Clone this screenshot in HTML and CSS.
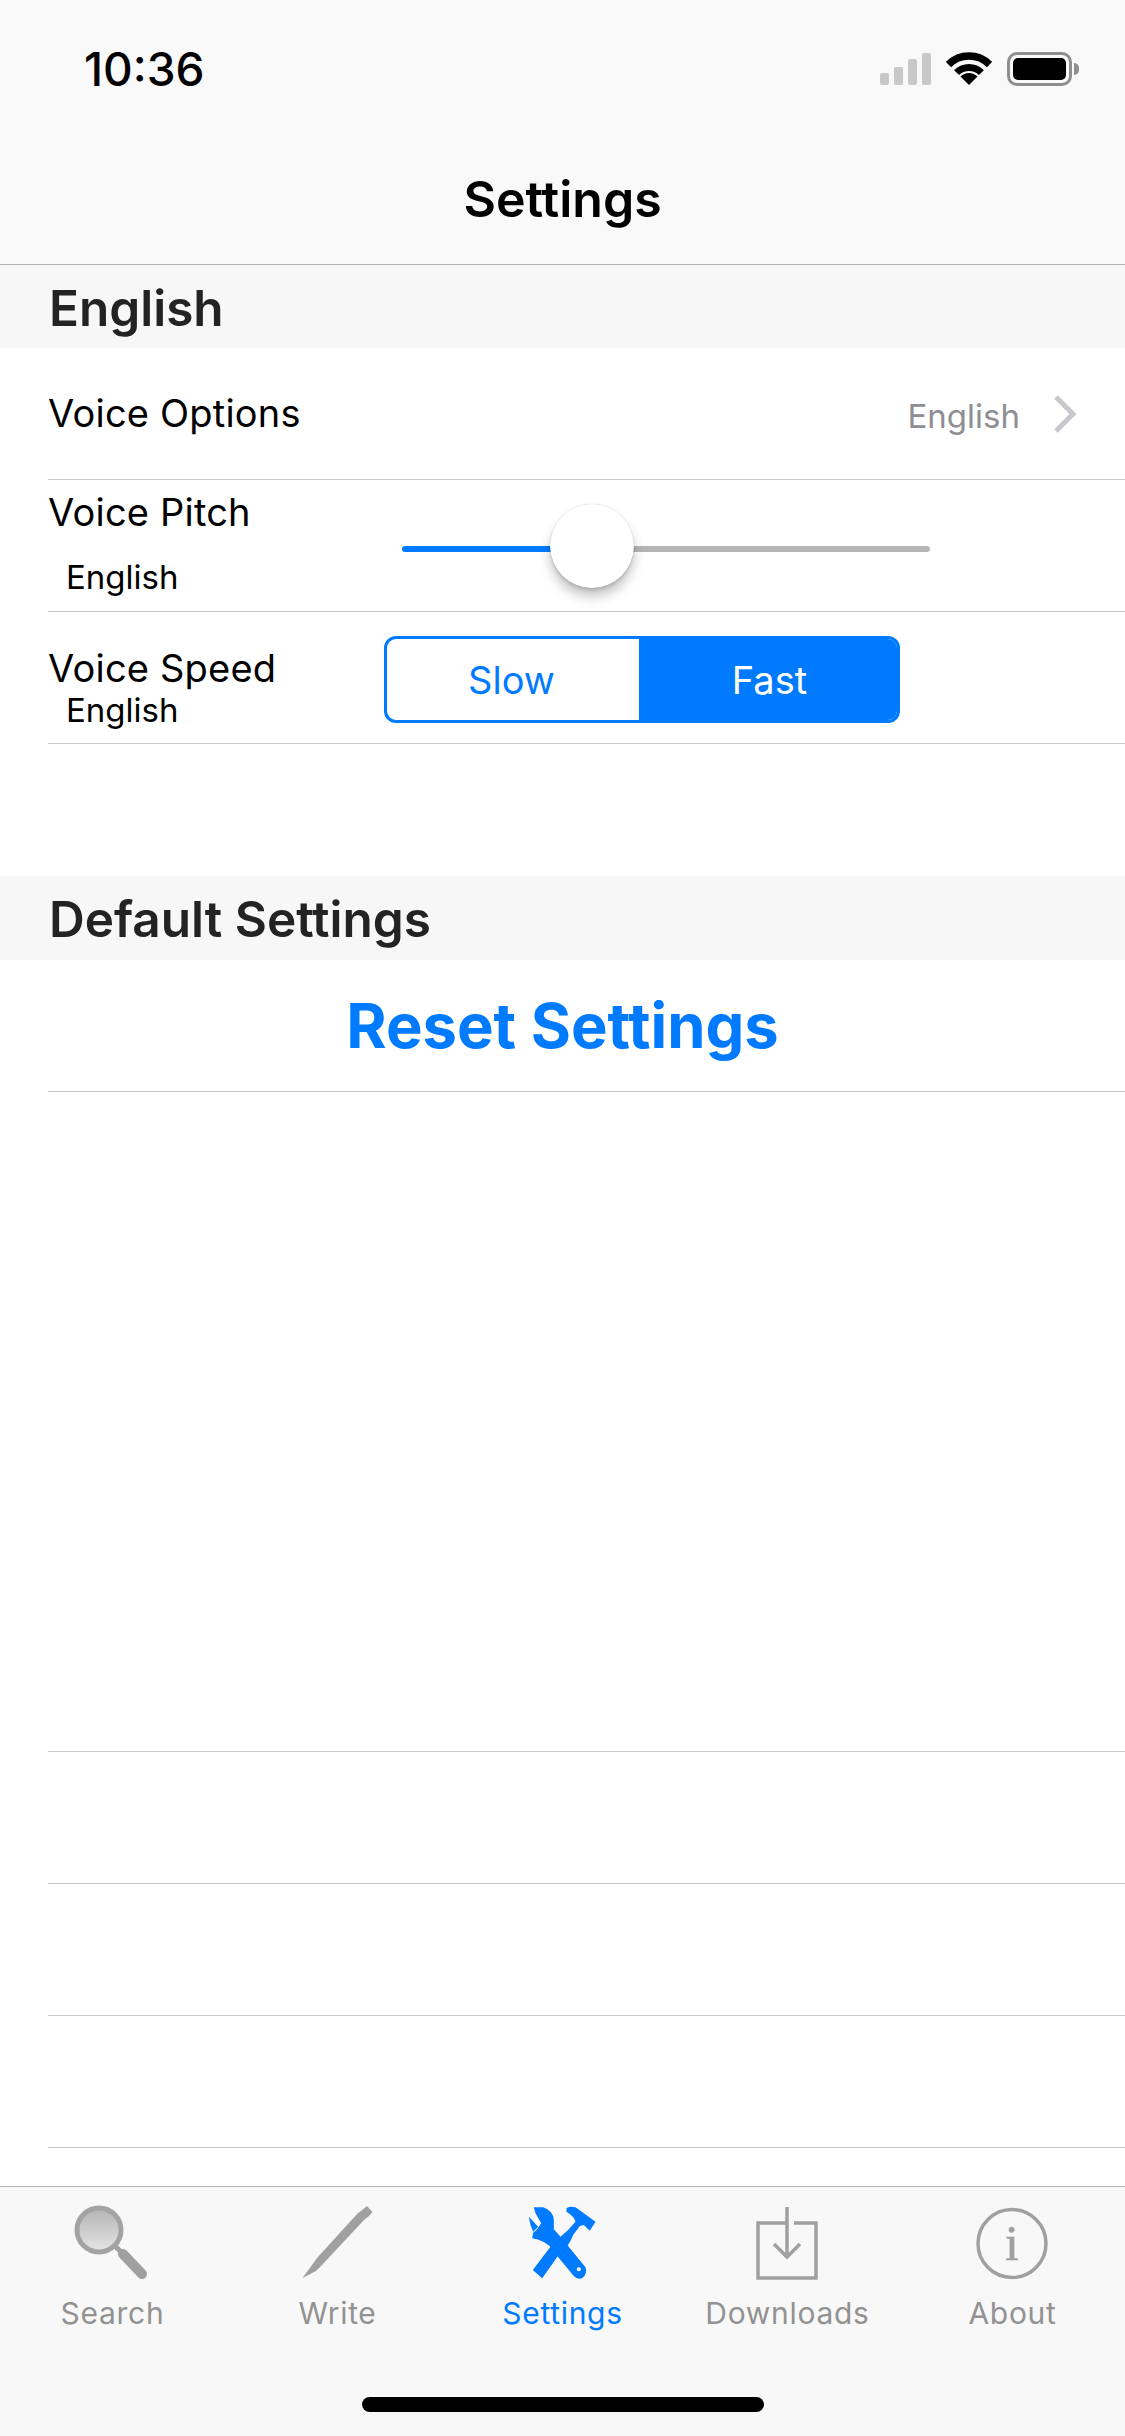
FILE: index.html
```html
<!DOCTYPE html>
<html lang="en">
<head>
<meta charset="utf-8">
<title>Settings</title>
<link rel="stylesheet" href="styles.css">
</head>
<body>
<div class="screen">
  <header class="top">
    <div class="status">
      <span class="time">10:36</span>
      <div class="status-icons">
        <div class="signal"><i class="bar b1"></i><i class="bar b2"></i><i class="bar b3"></i><i class="bar b4"></i></div>
        <svg class="wifi" width="46" height="33" viewBox="0 0 46 33"><path class="wifi-arc" stroke-width="7.5" d="M2.5 12.5A29 29 0 0 1 43.5 12.5"/><path class="wifi-arc" stroke-width="7" d="M10.6 20.6A17.5 17.5 0 0 1 35.4 20.6"/><path d="M23 33L14.5 24.5A12 12 0 0 1 31.5 24.5Z"/></svg>
        <div class="battery"><div class="battery-body"><div class="battery-fill"></div></div><div class="battery-nub"></div></div>
      </div>
    </div>
    <div class="nav"><h1 class="nav-title">Settings</h1></div>
  </header>

  <main class="list">
    <h2 class="section">English</h2>
    <div class="row">
      <span class="label label-solo">Voice Options</span>
      <span class="detail">English</span>
      <svg class="chevron" width="24" height="40" viewBox="0 0 24 40"><path d="M3 3L20 20L3 37"/></svg>
    </div>
    <div class="row">
      <div class="stack pitch-stack"><span class="label">Voice Pitch</span><span class="sub">English</span></div>
      <div class="slider">
        <div class="track-on"></div>
        <div class="track-off"></div>
        <div class="thumb"></div>
      </div>
    </div>
    <div class="row">
      <div class="stack speed-stack"><span class="label">Voice Speed</span><span class="sub">English</span></div>
      <div class="segment">
        <span class="seg seg-off">Slow</span>
        <span class="seg seg-on">Fast</span>
      </div>
    </div>
    <div class="blank"></div>
    <h2 class="section section-second">Default Settings</h2>
    <div class="row reset"><span class="reset-text">Reset Settings</span></div>
    <div class="blank-large"></div>
    <div class="row"></div>
    <div class="row"></div>
    <div class="row"></div>
    <div class="row"></div>
  </main>

  <footer class="tabbar">
    <nav class="tabs">
      <div class="tab">
        <svg class="tab-icon" viewBox="0 0 80 76">
          <defs><linearGradient id="lens" x1="0" y1="0" x2="0" y2="1"><stop offset="0" stop-color="#b4b4b4"/><stop offset="1" stop-color="#e6e6e6"/></linearGradient></defs>
          <path class="ic-line" stroke-width="5" d="M42 41L48 47"/>
          <path class="ic-line" stroke-width="10" stroke-linecap="round" d="M50 49L69 69"/>
          <circle cx="26" cy="25" r="22" fill="url(#lens)" stroke="#a3a3a3" stroke-width="5"/>
        </svg>
        <span class="tab-label">Search</span>
      </div>
      <div class="tab">
        <svg class="tab-icon" viewBox="0 0 80 76">
          <path class="ic-fill" d="M4.500 73L14 60L19 53L60 8L63 6L69 1L74.500 7L71 11L66 15L24 60L18 66Z"/>
        </svg>
        <span class="tab-label">Write</span>
      </div>
      <div class="tab tab-active">
        <svg class="tab-icon" viewBox="0 0 80 76">
          <g transform="translate(-22.5,-15) scale(.3333)">
            <path class="ic-blue" d="M198 55Q205 47 225 52L285 95L268 122L250 105L238 108L218 135Q205 170 185 180L125 265L97 240L150 170L180 140Q205 120 225 95Q222 80 198 65Z"/>
            <path class="ic-blue" d="M100 52L128 52Q158 62 160 90L160 118L180 140L255 232Q262 250 245 265Q230 270 220 258L172 200L158 178Q130 150 95 145L98 128L108 120L122 100L105 70Z"/>
            <path class="ic-blue" d="M85 80L113 110L98 125Q88 105 85 80Z"/>
            <circle class="ic-hole" cx="235" cy="238" r="6"/>
          </g>
        </svg>
        <span class="tab-label">Settings</span>
      </div>
      <div class="tab">
        <svg class="tab-icon" viewBox="0 0 80 76">
          <path class="ic-stroke" d="M39 18H10V73H68V18H46"/>
          <path class="ic-stroke" d="M39 2V52M26 39L39 52L52 39"/>
        </svg>
        <span class="tab-label">Downloads</span>
      </div>
      <div class="tab">
        <svg class="tab-icon" viewBox="0 0 80 76">
          <circle class="ic-stroke" cx="39" cy="38.500" r="34"/>
          <text class="ic-i" x="39" y="55" text-anchor="middle">i</text>
        </svg>
        <span class="tab-label">About</span>
      </div>
    </nav>
    <div class="home"></div>
  </footer>
</div>
</body>
</html>
```
FILE: styles.css
```css
* { box-sizing: border-box; }
html, body { margin: 0; padding: 0; }
body { width: 1125px; height: 2436px; overflow: hidden; background: #fff; font-family: Inter, "Liberation Sans", sans-serif; color: #000; }

.screen { width: 1125px; height: 2436px; display: flex; flex-direction: column; overflow: hidden; }

.top { height: 265px; flex: none; background: #f9f9f9; border-bottom: 1px solid #b2b2b2; }
.status { height: 132px; display: flex; align-items: flex-start; justify-content: space-between; padding: 0 47px 0 84px; }
.time { font-size: 46px; font-weight: 500; line-height: 54px; margin-top: 42px; }
.status-icons { display: flex; align-items: flex-start; gap: 15px; padding-top: 52px; }
.signal { display: flex; align-items: flex-end; gap: 5px; height: 33px; }
.bar { display: block; width: 9px; background: #c8c8c8; border-radius: 2px; }
.b1 { height: 12px; }
.b2 { height: 18px; }
.b3 { height: 26px; }
.b4 { height: 32px; }
.wifi { display: block; fill: #000; }
.wifi-arc { fill: none; stroke: #000; }
.battery { display: flex; align-items: center; gap: 2px; }
.battery-body { width: 65px; height: 34px; border: 3px solid #8e8e8e; border-radius: 10px; padding: 3px; }
.battery-fill { width: 100%; height: 100%; background: #000; border-radius: 5px; }
.battery-nub { width: 5px; height: 12px; background: #8e8e8e; border-radius: 0 6px 6px 0; margin-right: -1px; }

.nav { height: 132px; display: flex; align-items: center; justify-content: center; }
.nav-title { margin: 0; font-size: 50px; font-weight: 600; line-height: 58px; position: relative; top: 1px; }

.list { flex: 1; min-height: 0; overflow: hidden; background: #fff; }
.section { margin: 0; height: 83px; padding-left: 49px; background: #f7f7f7; color: #232323; font-size: 49.500px; font-weight: 600; line-height: 87px; overflow: hidden; }
.section-second { height: 84px; }

.row { height: 132px; margin-left: 48px; border-bottom: 1px solid #c8c8c8; display: flex; align-items: center; }
.label { font-size: 38px; line-height: 46px; letter-spacing: .2px; }
.label-solo { margin-top: -1px; }
.detail { margin-left: auto; color: #8e8e93; font-size: 33px; line-height: 46px; margin-top: 4px; }
.chevron { margin: 0 48px 0 33px; fill: none; stroke: #c7c7cc; stroke-width: 5px; }
.stack { width: 336px; flex: none; display: flex; flex-direction: column; }
.sub { font-size: 33px; line-height: 38px; padding-left: 18px; }
.pitch-stack { gap: 23.500px; margin-top: -6.500px; }
.speed-stack { margin-top: 18px; }
.speed-stack .sub { margin-top: 0; }

.slider { position: relative; margin-left: 18px; width: 528px; height: 6px; margin-top: 6px; display: flex; }
.track-on { width: 190px; background: #007aff; border-radius: 3px 0 0 3px; }
.track-off { flex: 1; background: #b5b5b5; border-radius: 0 3px 3px 0; }
.thumb { position: absolute; left: 148px; top: -42px; width: 84px; height: 84px; border-radius: 50%; background: #fff; box-shadow: 0 9px 12px rgba(0,0,0,.22), 0 3px 3px rgba(0,0,0,.1), 0 0 1px rgba(0,0,0,.25); }

.segment { width: 516px; height: 87px; display: flex; border: 3px solid #007aff; border-radius: 12px; overflow: hidden; margin-top: 4px; }
.seg { display: flex; align-items: center; justify-content: center; font-size: 38px; }
.seg-off { width: 252px; flex: none; color: #007aff; padding-right: 3px; }
.seg-on { flex: 1; background: #007aff; color: #fff; padding-left: 3px; }

.blank { height: 132px; }
.blank-large { height: 528px; }
.reset { justify-content: center; padding-right: 48px; }
.reset-text { color: #007aff; font-size: 61.500px; font-weight: 700; line-height: 72px; }

.tabbar { height: 250px; flex: none; background: #f8f8f8; border-top: 1px solid #b2b2b2; display: flex; flex-direction: column; }
.tabs { display: grid; grid-template-columns: repeat(5, 225px); padding-top: 18px; }
.tab { display: flex; flex-direction: column; align-items: center; color: #929292; }
.tab-active { color: #007aff; }
.tab-icon { display: block; width: 80px; height: 76px; }
.tab-label { font-size: 30px; line-height: 36px; margin-top: 14px; letter-spacing: .7px; }
.ic-fill { fill: #a0a0a0; }
.ic-line { fill: none; stroke: #a0a0a0; }
.ic-stroke { fill: none; stroke: #a0a0a0; stroke-width: 3.500px; }
.ic-blue { fill: #007aff; }
.ic-hole { fill: #f8f8f8; }
.ic-i { fill: #a0a0a0; stroke: #a0a0a0; stroke-width: .6px; font-family: "Liberation Serif", serif; font-size: 50px; }
.home { width: 402px; height: 15px; margin: auto auto 24px; background: #000; border-radius: 8px; }
```
